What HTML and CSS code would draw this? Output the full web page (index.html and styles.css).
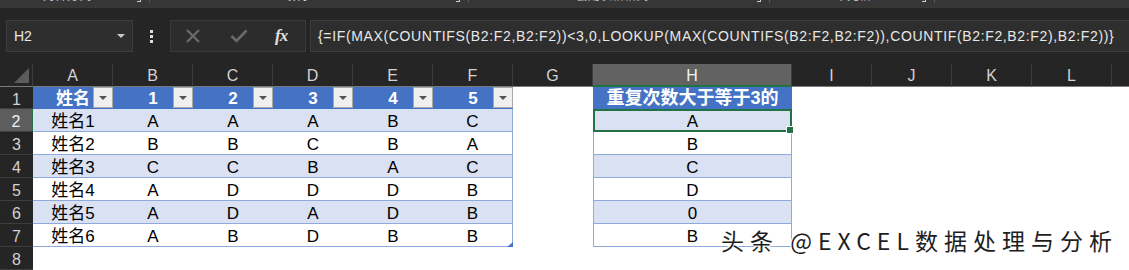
FILE: index.html
```html
<!DOCTYPE html>
<html lang="zh-CN">
<head>
<meta charset="utf-8">
<title>Excel</title>
<link rel="stylesheet" href="styles.css">
</head>
<body>
<div class="ribbon-edge">
  <div class="rgroup g1"><span class="rlabel">对齐方式</span><span class="rlaunch"></span><span class="rdiv"></span></div>
  <div class="rgroup g2"><span class="rlabel">数字</span><span class="rlaunch"></span><span class="rdiv"></span></div>
  <div class="rgroup g3"><span class="rlabel">套用表格格式</span><span class="rlaunch"></span><span class="rdiv"></span></div>
  <div class="rgroup g4"><span class="rlabel">单元格</span><span class="rlaunch"></span><span class="rdiv"></span></div>
</div>

<div class="fbar">
  <div class="namebox"><span>H2</span><span class="caret"></span></div>
  <div class="dots"><i></i><i></i><i></i></div>
  <div class="fbuttons">
    <svg class="ico-x" width="16" height="14" viewBox="0 0 16 14"><path d="M2 1 L14 13 M14 1 L2 13" stroke="#6b6b6b" stroke-width="2.2" fill="none"/></svg>
    <svg class="ico-ok" width="18" height="14" viewBox="0 0 18 14"><path d="M1.5 7 L6.5 12 L16.5 1.5" stroke="#6b6b6b" stroke-width="2.6" fill="none"/></svg>
    <span class="fx">fx</span>
  </div>
  <div class="finput">{=IF(MAX(COUNTIFS(B2:F2,B2:F2))&lt;3,0,LOOKUP(MAX(COUNTIFS(B2:F2,B2:F2)),COUNTIF(B2:F2,B2:F2),B2:F2))}</div>
</div>

<div class="sheet">
  <!-- column headers -->
  <div class="ch corner"><span class="corner-tri"></span></div>
  <div class="ch">A</div><div class="ch">B</div><div class="ch">C</div><div class="ch">D</div><div class="ch">E</div><div class="ch">F</div><div class="ch">G</div><div class="ch sel">H</div><div class="ch">I</div><div class="ch">J</div><div class="ch">K</div><div class="ch">L</div><div class="ch last"></div>

  <!-- row 1 -->
  <div class="rh">1</div>
  <div class="c hdr">姓名<span class="fb"></span></div>
  <div class="c hdr">1<span class="fb"></span></div>
  <div class="c hdr">2<span class="fb"></span></div>
  <div class="c hdr">3<span class="fb"></span></div>
  <div class="c hdr">4<span class="fb"></span></div>
  <div class="c hdr">5<span class="fb"></span></div>
  <div class="c"></div>
  <div class="c hdr hcol">重复次数大于等于3的</div>
  <div class="c"></div><div class="c"></div><div class="c"></div><div class="c"></div><div class="c"></div>

  <!-- row 2 -->
  <div class="rh sel">2</div>
  <div class="c band bl">姓名1</div><div class="c band bl">A</div><div class="c band bl">A</div><div class="c band bl">A</div><div class="c band bl">B</div><div class="c band bl rb">C</div>
  <div class="c"></div>
  <div class="c band bl lb rb active">A</div>
  <div class="c"></div><div class="c"></div><div class="c"></div><div class="c"></div><div class="c"></div>

  <!-- row 3 -->
  <div class="rh">3</div>
  <div class="c bl">姓名2</div><div class="c bl">B</div><div class="c bl">B</div><div class="c bl">C</div><div class="c bl">B</div><div class="c bl rb">A</div>
  <div class="c"></div>
  <div class="c bl lb rb">B</div>
  <div class="c"></div><div class="c"></div><div class="c"></div><div class="c"></div><div class="c"></div>

  <!-- row 4 -->
  <div class="rh">4</div>
  <div class="c band bl">姓名3</div><div class="c band bl">C</div><div class="c band bl">C</div><div class="c band bl">B</div><div class="c band bl">A</div><div class="c band bl rb">C</div>
  <div class="c"></div>
  <div class="c band bl lb rb">C</div>
  <div class="c"></div><div class="c"></div><div class="c"></div><div class="c"></div><div class="c"></div>

  <!-- row 5 -->
  <div class="rh">5</div>
  <div class="c bl">姓名4</div><div class="c bl">A</div><div class="c bl">D</div><div class="c bl">D</div><div class="c bl">D</div><div class="c bl rb">B</div>
  <div class="c"></div>
  <div class="c bl lb rb">D</div>
  <div class="c"></div><div class="c"></div><div class="c"></div><div class="c"></div><div class="c"></div>

  <!-- row 6 -->
  <div class="rh">6</div>
  <div class="c band bl">姓名5</div><div class="c band bl">A</div><div class="c band bl">D</div><div class="c band bl">A</div><div class="c band bl">D</div><div class="c band bl rb">B</div>
  <div class="c"></div>
  <div class="c band bl lb rb">0</div>
  <div class="c"></div><div class="c"></div><div class="c"></div><div class="c"></div><div class="c"></div>

  <!-- row 7 -->
  <div class="rh">7</div>
  <div class="c bl">姓名6</div><div class="c bl">A</div><div class="c bl">B</div><div class="c bl">D</div><div class="c bl">B</div><div class="c bl rb resize">B</div>
  <div class="c"></div>
  <div class="c bl lb rb">B</div>
  <div class="c"></div><div class="c"></div><div class="c"></div><div class="c"></div><div class="c"></div>

  <!-- row 8 -->
  <div class="rh">8</div>
  <div class="c"></div><div class="c"></div><div class="c"></div><div class="c"></div><div class="c"></div><div class="c"></div><div class="c"></div><div class="c"></div><div class="c"></div><div class="c"></div><div class="c"></div><div class="c"></div><div class="c"></div>
</div>

<div class="watermark">头条 @EXCEL数据处理与分析</div>
</body>
</html>
```
FILE: styles.css
```css
* { box-sizing: border-box; }
html, body { margin: 0; padding: 0; }
body {
  width: 1129px;
  height: 270px;
  overflow: hidden;
  background: #252525;
  font-family: "Liberation Sans", "Noto Sans CJK SC", sans-serif;
  position: relative;
}

/* ribbon bottom edge */
.ribbon-edge {
  height: 8px;
  background: #363636;
  display: flex;
  overflow: hidden;
}
.rgroup {
  display: flex;
  align-items: flex-start;
  height: 8px;
}
.g1 { width: 150px; padding-left: 43px; }
.g2 { width: 319px; padding-left: 138px; }
.g3 { width: 301px; padding-left: 107px; }
.g4 { width: 165px; padding-left: 65px; }
.rlabel {
  font-size: 12px;
  line-height: 12px;
  margin-top: -10px;
  color: #cfcfcf;
  white-space: nowrap;
}
.rlaunch {
  margin-left: auto;
  margin-right: 8px;
  width: 4px;
  height: 2px;
  border-right: 1px solid #cfcfcf;
  border-bottom: 1px solid #cfcfcf;
}
.rdiv {
  width: 1px;
  height: 3px;
  background: #555;
}

/* formula bar */
.fbar {
  display: flex;
  height: 32px;
  margin-top: 12px;
  padding-left: 6px;
}
.namebox {
  width: 127px;
  background: #2e2e2e;
  border: 1px solid #3d3d3d;
  display: flex;
  align-items: center;
  justify-content: space-between;
  padding: 0 7px 0 7px;
  color: #e8e8e8;
  font-size: 14px;
}
.caret {
  width: 0;
  height: 0;
  border-left: 4px solid transparent;
  border-right: 4px solid transparent;
  border-top: 4px solid #c8c8c8;
}
.dots {
  width: 37px;
  display: flex;
  flex-direction: column;
  align-items: center;
  justify-content: center;
  gap: 2px;
}
.dots i {
  display: block;
  width: 3px;
  height: 3px;
  background: #dcdcdc;
}
.fbuttons {
  width: 136px;
  background: #2c2c2c;
  border: 1px solid #3a3a3a;
  display: flex;
  align-items: center;
  padding-left: 14px;
}
.ico-ok { margin-left: 29px; }
.fx {
  margin-left: 27px;
  font-family: "Liberation Serif", serif;
  font-style: italic;
  font-weight: bold;
  font-size: 17px;
  color: #e0e0e0;
  letter-spacing: -1px;
}
.finput {
  flex: 1;
  margin-left: 4px;
  background: #2e2e2e;
  border: 1px solid #3d3d3d;
  border-right: none;
  color: #e8e8e8;
  font-size: 14px;
  letter-spacing: 0.65px;
  padding-left: 7px;
  display: flex;
  align-items: center;
  white-space: nowrap;
  overflow: hidden;
}

/* sheet grid */
.sheet {
  margin-top: 12px;
  display: grid;
  grid-template-columns: 33px repeat(7, 80px) 199px repeat(4, 80px) 17px;
  grid-template-rows: 23px 22px repeat(7, 23px);
}
.ch {
  background: #252525;
  color: #d2d2d2;
  font-size: 16px;
  text-align: center;
  line-height: 20px;
  padding-top: 2px;
  border-right: 1px solid #3e3e3e;
  border-bottom: 1px solid #7a7a7a;
}
.ch.last { border-right: none; }
.ch.corner { position: relative; }
.corner-tri {
  position: absolute;
  right: 3px;
  bottom: 3px;
  width: 15px;
  height: 15px;
  background: #5c5c5c;
  clip-path: polygon(100% 0, 100% 100%, 0 100%);
}
.ch.sel {
  background: #626262;
  color: #f2f2f2;
  border-bottom: 2px solid #217346;
}
.rh {
  background: #252525;
  color: #d2d2d2;
  font-size: 16px;
  text-align: center;
  line-height: 21px;
  padding-top: 2px;
  border-bottom: 1px solid #3e3e3e;
}
.rh.sel {
  background: #5d5d5d;
  color: #f2f2f2;
  border-right: 1px solid #217346;
}
.c {
  background: #fff;
  color: #000;
  font-size: 17px;
  text-align: center;
  line-height: 21px;
  padding-top: 2px;
  white-space: nowrap;
  position: relative;
}
.c.hdr {
  background: #4472c4;
  color: #fff;
  font-weight: bold;
  padding-top: 1px;
}
.c.hcol { font-size: 18px; }
.c.band { background: #d9e1f2; }
.c.bl { border-bottom: 1px solid #8ea9db; }
.c.rb { border-right: 1px solid #8ea9db; }
.c.lb { border-left: 1px solid #8ea9db; }

.fb {
  position: absolute;
  right: 0;
  top: 0;
  width: 20px;
  height: 21px;
  background: #efefef;
  border: 1px solid #a9a9a9;
  display: flex;
  align-items: center;
  justify-content: center;
}
.fb::after {
  content: "";
  width: 0;
  height: 0;
  border-left: 4px solid transparent;
  border-right: 4px solid transparent;
  border-top: 4px solid #555;
}

.c.active::after {
  content: "";
  position: absolute;
  left: -1px;
  top: 0;
  right: -1px;
  bottom: -1px;
  border: 2px solid #217346;
}
.c.active::before {
  content: "";
  position: absolute;
  right: -3px;
  bottom: -3px;
  width: 6px;
  height: 6px;
  background: #217346;
  border: 1px solid #fff;
  z-index: 2;
}
.c.resize::after {
  content: "";
  position: absolute;
  right: -1px;
  bottom: -1px;
  width: 6px;
  height: 5px;
  background: #4472c4;
  clip-path: polygon(100% 0, 100% 100%, 0 100%);
}

.watermark {
  position: absolute;
  left: 721px;
  top: 227px;
  font-family: "Noto Sans CJK SC", sans-serif;
  font-size: 23px;
  line-height: 27px;
  letter-spacing: 6px;
  color: #1e1e1e;
  white-space: nowrap;
  text-shadow: 1px 0 #fff, -1px 0 #fff, 0 1px #fff, 0 -1px #fff, 1px 1px #fff, -1px -1px #fff;
}
```
